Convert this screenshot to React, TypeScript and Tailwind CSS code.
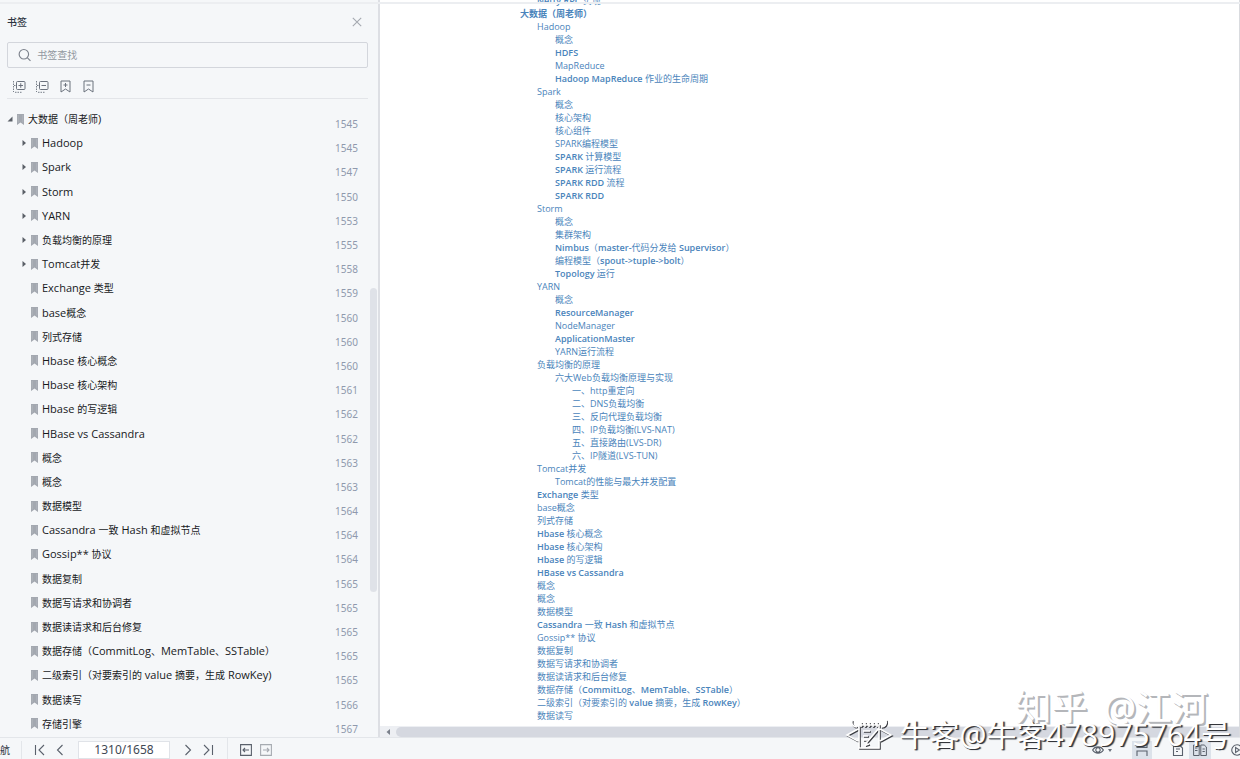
import { Fragment } from "react";

type Bookmark = { title: string; page: number; state?: "open" | "closed" };

const bookmarks: Bookmark[] = [
  { title: "大数据（周老师)", page: 1545, state: "open" },
  { title: "Hadoop", page: 1545, state: "closed" },
  { title: "Spark", page: 1547, state: "closed" },
  { title: "Storm", page: 1550, state: "closed" },
  { title: "YARN", page: 1553, state: "closed" },
  { title: "负载均衡的原理", page: 1555, state: "closed" },
  { title: "Tomcat并发", page: 1558, state: "closed" },
  { title: "Exchange 类型", page: 1559 },
  { title: "base概念", page: 1560 },
  { title: "列式存储", page: 1560 },
  { title: "Hbase 核心概念", page: 1560 },
  { title: "Hbase 核心架构", page: 1561 },
  { title: "Hbase 的写逻辑", page: 1562 },
  { title: "HBase vs Cassandra", page: 1562 },
  { title: "概念", page: 1563 },
  { title: "概念", page: 1563 },
  { title: "数据模型", page: 1564 },
  { title: "Cassandra 一致 Hash 和虚拟节点", page: 1564 },
  { title: "Gossip** 协议", page: 1564 },
  { title: "数据复制", page: 1565 },
  { title: "数据写请求和协调者", page: 1565 },
  { title: "数据读请求和后台修复", page: 1565 },
  { title: "数据存储（CommitLog、MemTable、SSTable）", page: 1565 },
  { title: "二级索引（对要索引的 value 摘要，生成 RowKey)", page: 1565 },
  { title: "数据读写", page: 1566 },
  { title: "存储引擎", page: 1567 },
];

// [level, text, bold]
const outline: [number, string, boolean?][] = [
  [1, "Netty RPC 实现", true],
  [0, "大数据（周老师）", true],
  [1, "Hadoop"],
  [2, "概念"],
  [2, "HDFS", true],
  [2, "MapReduce"],
  [2, "Hadoop MapReduce 作业的生命周期", true],
  [1, "Spark"],
  [2, "概念"],
  [2, "核心架构"],
  [2, "核心组件"],
  [2, "SPARK编程模型"],
  [2, "SPARK 计算模型", true],
  [2, "SPARK 运行流程", true],
  [2, "SPARK RDD 流程", true],
  [2, "SPARK RDD", true],
  [1, "Storm"],
  [2, "概念"],
  [2, "集群架构"],
  [2, "Nimbus（master-代码分发给 Supervisor）", true],
  [2, "编程模型（spout->tuple->bolt）", true],
  [2, "Topology 运行", true],
  [1, "YARN"],
  [2, "概念"],
  [2, "ResourceManager", true],
  [2, "NodeManager"],
  [2, "ApplicationMaster", true],
  [2, "YARN运行流程"],
  [1, "负载均衡的原理"],
  [2, "六大Web负载均衡原理与实现"],
  [3, "一、http重定向"],
  [3, "二、DNS负载均衡"],
  [3, "三、反向代理负载均衡"],
  [3, "四、IP负载均衡(LVS-NAT)"],
  [3, "五、直接路由(LVS-DR)"],
  [3, "六、IP隧道(LVS-TUN)"],
  [1, "Tomcat并发"],
  [2, "Tomcat的性能与最大并发配置"],
  [1, "Exchange 类型", true],
  [1, "base概念"],
  [1, "列式存储"],
  [1, "Hbase 核心概念", true],
  [1, "Hbase 核心架构", true],
  [1, "Hbase 的写逻辑", true],
  [1, "HBase vs Cassandra", true],
  [1, "概念"],
  [1, "概念"],
  [1, "数据模型"],
  [1, "Cassandra 一致 Hash 和虚拟节点", true],
  [1, "Gossip** 协议"],
  [1, "数据复制"],
  [1, "数据写请求和协调者"],
  [1, "数据读请求和后台修复"],
  [1, "数据存储（CommitLog、MemTable、SSTable）", true],
  [1, "二级索引（对要索引的 value 摘要，生成 RowKey）", true],
  [1, "数据读写"],
];

const indent = ["pl-[140px]", "pl-[157px]", "pl-[175px]", "pl-[192px]"];

// Latin runs get their own size and weight, Chinese stays as it is
const Mixed = ({ text, latin }: { text: string; latin: string }) => (
  <>
    {text.split(/([\x20-\x7e]+)/).map((part, i) =>
      i % 2 ? (
        <span key={i} className={latin}>
          {part}
        </span>
      ) : (
        <Fragment key={i}>{part}</Fragment>
      ),
    )}
  </>
);

const Flag = () => (
  <svg viewBox="0 0 7 11" className="h-[11px] w-[7px] shrink-0">
    <path d="M0 0h7v11L3.5 8.6 0 11z" fill="#a3a8b0" />
    <path d="M1.2 1v7.5M5.8 1v7.5" stroke="#b9bdc4" strokeWidth=".6" />
  </svg>
);

const Arrow = ({ state }: { state?: "open" | "closed" }) => (
  <svg viewBox="0 0 6 6" className="mr-1 h-[6px] w-[6px] shrink-0" fill="#5b6068">
    {state === "open" && <path d="M5.5.5v5h-5z" />}
    {state === "closed" && <path d="M1.5 0 5 3 1.5 6z" />}
  </svg>
);

const TreeTool = ({ minus }: { minus?: boolean }) => (
  <svg viewBox="0 0 13 13" className="size-[13px]" fill="none" stroke="#6b727d">
    <rect x="3.5" y="1.5" width="8.5" height="8" rx="1" />
    <path d={minus ? "M5.5 5.5h4.5" : "M5.5 5.5h4.5M7.75 3.2v4.6"} />
    <path d="M.5 1v11M1 5.5h2M2 12.3h7" strokeDasharray="1.5 1" strokeWidth=".9" />
  </svg>
);

const FlagTool = ({ minus }: { minus?: boolean }) => (
  <svg viewBox="0 0 13 13" className="size-[13px]" fill="none" stroke="#6b727d">
    <path d="M2 1h9v11L6.5 9 2 12z" />
    <path d={minus ? "M4.5 5h4" : "M4.5 5h4M6.5 3v4"} />
  </svg>
);

const Sidebar = () => (
  <aside className="flex w-[380px] shrink-0 border-r-2 border-[#dddfe4] bg-[#f5f7f9]">
    <div className="flex min-w-0 flex-1 flex-col pl-[7px]">
      <div className="flex items-center justify-between pt-[14px] pr-2">
        <h2 className="text-[10px] leading-4 font-medium text-[#2d3542]">书签</h2>
        <button aria-label="关闭">
          <svg viewBox="0 0 10 10" className="size-[10px]" stroke="#a5a9b0" strokeWidth="1.1">
            <path d="M.8.8l8.4 8.4M9.2.8L.8 9.2" />
          </svg>
        </button>
      </div>
      <label className="mt-3 mr-[2px] flex h-[26px] items-center gap-[6px] rounded-[2px] border border-[#d3d6dc] pl-[10px]">
        <svg viewBox="0 0 14 14" className="size-[14px]" fill="none" stroke="#7b818b" strokeWidth="1.2">
          <circle cx="6.2" cy="6.2" r="5" />
          <path d="M9.8 9.8l3.4 3.4" />
        </svg>
        <input
          aria-label="书签查找"
          placeholder="书签查找"
          className="w-full bg-transparent text-[10px] outline-none placeholder:text-[#92979f]"
        />
      </label>
      <div className="mr-[2px] flex items-center gap-[10px] border-b border-[#e3e5e9] pt-3 pb-[5px] pl-[6px]">
        <button aria-label="展开全部"><TreeTool /></button>
        <button aria-label="收起全部"><TreeTool minus /></button>
        <button aria-label="添加书签"><FlagTool /></button>
        <button aria-label="删除书签"><FlagTool minus /></button>
      </div>
      <ul className="mt-2 mb-[1px] flex min-h-0 flex-1 flex-col">
        {bookmarks.map((b, i) => (
          <li
            key={i}
            className={`flex min-h-0 flex-1 items-center pr-3 ${b.state === "open" ? "" : "pl-[14px]"}`}
          >
            <Arrow state={b.state} />
            <Flag />
            <span className="ml-[4px] flex-1 text-[10px] leading-4 whitespace-pre text-[#17191c]">
              <Mixed text={b.title} latin="font-['Open_Sans'] text-[11px]" />
            </span>
            <span className="pt-[10px] text-[10px] leading-[14px] text-[#8f99ad]">{b.page}</span>
          </li>
        ))}
      </ul>
    </div>
    <div className="grid w-2 grid-rows-[288fr_304fr_145fr]">
      <div className="row-start-2 w-[7px] rounded-full bg-[#dfe2e8]" />
    </div>
  </aside>
);

const Doc = () => (
  <main className="flex min-w-0 flex-1 flex-col border-r border-[#d9dbdf] bg-white">
    <div className="min-h-0 flex-1 overflow-hidden">
      <ul className="-mt-[6px] text-[9px] leading-[13px] text-[#4a84bb]">
        {outline.map(([level, text, bold], i) => (
          <li key={i} className={`h-[13px] whitespace-pre ${indent[level]} ${level === 0 ? "font-bold" : ""}`}>
            <Mixed
              text={text}
              latin={bold ? "font-['Open_Sans'] font-semibold" : "font-['Open_Sans'] font-normal"}
            />
          </li>
        ))}
      </ul>
    </div>
    <div className="flex h-[11px] items-center bg-[#edeff3]">
      <svg viewBox="0 0 4 6" className="mx-[6px] h-[6px] w-[4px]" fill="#7a808b">
        <path d="M4 0v6L.5 3z" />
      </svg>
      <div className="h-[10px] flex-1 rounded-l-full bg-[#d5d8e0]" />
    </div>
  </main>
);

const Nav = ({ d, label }: { d: string; label: string }) => (
  <button aria-label={label}>
    <svg viewBox="0 0 12 12" className="size-3" fill="none" stroke="#5a616c" strokeWidth="1.1">
      <path d={d} />
    </svg>
  </button>
);

const StatusBar = () => (
  <footer className="flex h-[22px] shrink-0 items-center overflow-hidden border-t border-[#e3e6ea] bg-[#f5f7f9] pt-[3px]">
    <span className="w-[21px] text-[10px] text-[#2d3542]">航</span>
    <div className="flex items-center gap-2 border-l border-[#e3e6ea] pl-3">
      <Nav label="第一页" d="M1.5 1v10M10 1 5 6l5 5" />
      <Nav label="上一页" d="M8.5 1l-5 5 5 5" />
      <input
        aria-label="页码"
        defaultValue="1310/1658"
        className="ml-1 h-[18px] w-[92px] border border-[#e0e3e8] bg-white text-center text-[12px] text-[#414854]"
      />
      <span className="ml-1 flex gap-2">
        <Nav label="下一页" d="M3.5 1l5 5-5 5" />
        <Nav label="最后一页" d="M2 1l5 5-5 5M10.5 1v10" />
      </span>
    </div>
    <div className="ml-[13px] flex gap-2 border-l border-[#e3e6ea] pl-[12px]">
      <Nav label="后退" d="M.6.6h10.8v10.8H.6zM9 6H3M5 4 3 6l2 2" />
      <span className="opacity-50">
        <Nav label="前进" d="M.6.6h10.8v10.8H.6zM3 6h6M7 4l2 2-2 2" />
      </span>
    </div>
    <div className="-mr-[3px] ml-auto flex items-center">
      <Nav label="护眼" d="M.6 6C3 1.8 9 1.8 11.4 6 9 10.2 3 10.2.6 6zM6 3.8a2.2 2.2 0 1 0 .01 0z" />
      <svg viewBox="0 0 4 3" className="mr-5 ml-1 h-[3px] w-[4px]" fill="#6b727d">
        <path d="M0 0h4L2 3z" />
      </svg>
      <span className="mr-5 flex h-[18px] w-[20px] items-center justify-center bg-[#dce2ea]">
        <Nav label="连续" d="M1 0v3.5h10V0M1 12V7h10v5" />
      </span>
      <Nav label="单页" d="M1.5 1h6L10.5 4v7.5h-9zM4 5h4M4 7.5h2" />
      <span className="mr-5 ml-[5px] flex h-[18px] w-[22px] items-center justify-center bg-[#dce2ea]">
        <svg viewBox="0 0 14 12" className="h-3 w-[14px]" fill="none" stroke="#5a616c">
          <path d="M.6 1h5.6v10.5H.6zM7.8 1h3.4l2.2 2v8.5H7.8zM2 4h2.5M2 6.5h2.5M9.5 5h2.3M9.5 7.5h2.3" />
        </svg>
      </span>
      <Nav label="播放" d="M6 .8a5.2 5.2 0 1 0 .01 0zM4.6 3.6v4.8L8.5 6z" />
    </div>
  </footer>
);

const Watermarks = () => (
  <div className="pointer-events-none">
    <div className="absolute right-[32px] bottom-[25px] flex gap-4 text-[36px] leading-[52px] text-white [text-shadow:1px_1px_0_#b4b6ba,2px_2px_0_#b4b6ba]">
      <span>知乎</span>
      <span>@江河</span>
    </div>
    <div className="absolute right-[9px] bottom-[2px] flex items-center gap-2 text-[30px] leading-[44px] text-white [text-shadow:1px_1px_0_#33353a,2px_1px_1px_#55585e]">
      <svg viewBox="0 0 46 32" className="h-8 w-[46px] overflow-visible" fill="none">
        {[
          { c: "#3b3d42", t: "translate(1 1)" },
          { c: "#fff", t: "" },
        ].map(({ c, t }) => (
          <g key={c} stroke={c} transform={t} strokeWidth="1.6">
            <path d="M12 10 1 16l11 6M34 10l11 6-11 6M13 6h20v23H13zM17 12h7M17 17h5M17 21h4M33 9 21 23l-1 3 3-1" />
            <path d="M15 3v5M19 3v5M23 3v5M27 3v5M31 3v5M6 1c-1 4 1 7 5 7M40 1c1 4-1 7-5 7" />
          </g>
        ))}
      </svg>
      <span>牛客@牛客478975764号</span>
    </div>
  </div>
);

const App = () => {
  return (
    <div className="relative flex h-screen flex-col overflow-hidden bg-white font-['Noto_Sans','Noto_Sans_CJK_SC',sans-serif]">
      <div className="flex min-h-0 flex-1">
        <Sidebar />
        <Doc />
      </div>
      <StatusBar />
      <div className="absolute inset-x-0 top-[2px] h-[2px] bg-[#eceef1]" />
      <Watermarks />
    </div>
  );
};

export default App;
